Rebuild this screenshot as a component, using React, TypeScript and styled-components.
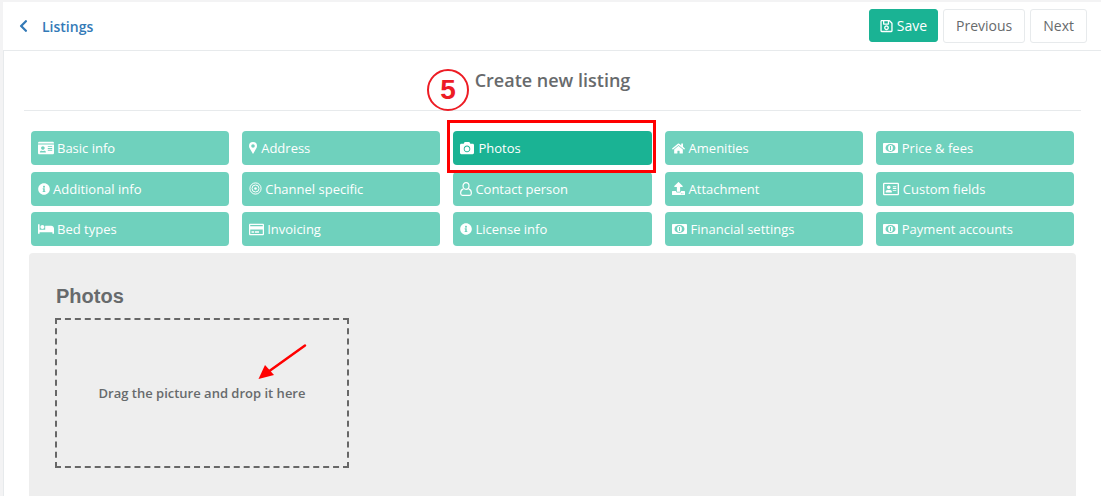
import React from "react";
import styled, { createGlobalStyle } from "styled-components";
import {
  FaIdCard, FaCamera, FaHome, FaInfoCircle,
  FaUpload, FaRegAddressCard, FaBed, FaRegCreditCard, FaRegSave, FaChevronLeft,
} from "react-icons/fa";

const Global = createGlobalStyle`
  html, body { margin: 0; padding: 0; background: #f3f3f4; overflow: hidden; }
  * { box-sizing: border-box; }
`;

const Page = styled.div`
  position: relative;
  width: 1101px;
  height: 496px;
  padding: 2px 0 0 3px;
  overflow: hidden;
  font-family: "Open Sans", "Liberation Sans", sans-serif;
  color: #676a6c;
`;

const Header = styled.header`
  height: 49px;
  background: #fff;
  border-bottom: 1px solid #e7eaec;
  display: flex;
  align-items: center;
  justify-content: space-between;
  padding: 0 14px 0 16px;
`;

const Back = styled.a`
  display: flex;
  align-items: center;
  gap: 14px;
  color: #337ab7;
  font-size: 14px;
  font-weight: 600;
  svg { width: 9px; height: 14px; }
`;

const Actions = styled.div`
  display: flex;
  gap: 5px;
  align-items: center;
  margin-bottom: 1px;
`;

const Button = styled.button<{ $primary?: boolean }>`
  height: ${p => (p.$primary ? 33 : 34)}px;
  padding: 0 ${p => (p.$primary ? 10 : 12)}px;
  display: flex;
  align-items: center;
  gap: 4px;
  font: 14px "Open Sans", "Liberation Sans", sans-serif;
  border-radius: 3px;
  border: 1px solid ${p => (p.$primary ? "#1ab394" : "#e7eaec")};
  background: ${p => (p.$primary ? "#1ab394" : "#fff")};
  color: ${p => (p.$primary ? "#fff" : "#676a6c")};
  svg { width: 13px; height: 14px; }
`;

const Main = styled.main`
  height: 445px;
  background: #fff;
  border-left: 1px solid #e7eaec;
  padding: 0 20px 0 25px;
  overflow: hidden;
`;

const TitleRow = styled.div`
  height: 60px;
  margin: 0 0 20px -5px;
  width: 1057px;
  border-bottom: 1px solid #e7eaec;
  display: flex;
  justify-content: center;
  padding-top: 17px;
`;

const Title = styled.h2`
  margin: 0;
  font-size: 18px;
  line-height: 25px;
  font-weight: 600;
  color: #676a6c;
`;

const TabGrid = styled.nav`
  display: grid;
  width: 1043px;
  margin-left: 2px;
  grid-template-columns: repeat(5, 1fr);
  column-gap: 13px;
  grid-auto-rows: 34px;
  row-gap: 6.5px;
`;

const Tab = styled.div<{ $active?: boolean; $iconWidth: number; $gap: number }>`
  display: flex;
  align-items: center;
  gap: ${p => p.$gap}px;
  padding: 0 7px;
  border-radius: 4px;
  background: ${p => (p.$active ? "#1ab394" : "#6fd1bd")};
  color: #fff;
  font-size: 13px;
  white-space: nowrap;
  svg { flex: none; width: ${p => p.$iconWidth}px; height: auto; }
`;

const Panel = styled.section`
  margin: 7px 0 0 0;
  width: 1047px;
  height: 260px;
  background: #eeeeee;
  border-radius: 4px;
  padding: 32px 26px;
`;

const PanelTitle = styled.h3`
  margin: 0 0 11px 1px;
  font: bold 20px/22px "Liberation Sans", Arial, sans-serif;
  color: #676a6c;
`;

const DropZone = styled.div`
  width: 294px;
  height: 150px;
  border: 2px dashed #676767;
  display: flex;
  align-items: center;
  justify-content: center;
  font-size: 13px;
  font-weight: 600;
  color: #676a6c;
`;

const Step = styled.div`
  position: absolute;
  left: 427px;
  top: 69px;
  width: 42px;
  height: 42px;
  border: 2px solid #ed1c24;
  border-radius: 50%;
  display: flex;
  align-items: center;
  justify-content: center;
  font: bold 28px/1 "Liberation Sans", Arial, sans-serif;
  color: #ed1c24;
`;

const Highlight = styled.div`
  position: absolute;
  left: 447px;
  top: 120px;
  width: 209px;
  height: 53px;
  border: 3px solid #ff0000;
`;

const Arrow = styled.svg`
  position: absolute;
  left: 250px;
  top: 340px;
`;

const Money = () => (
  <svg viewBox="0 0 15 10">
    <rect width="15" height="10" rx="0.8" fill="#fff" />
    <ellipse cx="7.5" cy="5" rx="5" ry="3.9" fill="#6fd1bd" />
    <ellipse cx="7.5" cy="5" rx="2.4" ry="3.1" fill="#fff" />
    <rect x="7" y="3" width="1" height="4" fill="#6fd1bd" />
  </svg>
);

const Marker = () => (
  <svg viewBox="0 0 8 12">
    <path
      fillRule="evenodd"
      fill="#fff"
      d="M4 0a4 4 0 0 1 4 4c0 1.1-.4 1.8-.8 2.6L4 12 .8 6.6C.4 5.8 0 5.1 0 4a4 4 0 0 1 4-4zm0 2.2a1.8 1.8 0 1 0 0 3.6 1.8 1.8 0 0 0 0-3.6z"
    />
  </svg>
);

const UserOutline = () => (
  <svg viewBox="0 0 12 14" fill="none" stroke="#fff" strokeWidth="1.2">
    <ellipse cx="6" cy="4" rx="3" ry="3.3" />
    <path d="M3.4 6.9C1.8 7.4.7 8.8.7 10.6v.9c0 1 .8 1.8 1.8 1.8h7c1 0 1.8-.8 1.8-1.8v-.9c0-1.8-1.1-3.2-2.7-3.7" />
  </svg>
);

const Rings = () => (
  <svg viewBox="0 0 13 13" fill="none" stroke="#fff">
    <circle cx="6.5" cy="6.5" r="5.6" strokeWidth="1" />
    <circle cx="6.5" cy="6.5" r="3.5" strokeWidth="1" />
    <circle cx="6.5" cy="6.5" r="1.3" fill="#fff" strokeWidth="0" />
  </svg>
);

type TabItem = { icon: React.ComponentType; label: string; width: number; gap: number; active?: boolean };

const tabs: TabItem[] = [
  { icon: FaIdCard, label: "Basic info", width: 16, gap: 3 },
  { icon: Marker, label: "Address", width: 8, gap: 4 },
  { icon: FaCamera, label: "Photos", width: 14, gap: 4, active: true },
  { icon: FaHome, label: "Amenities", width: 13, gap: 4 },
  { icon: Money, label: "Price & fees", width: 15, gap: 4 },
  { icon: FaInfoCircle, label: "Additional info", width: 12, gap: 3 },
  { icon: Rings, label: "Channel specific", width: 13, gap: 3 },
  { icon: UserOutline, label: "Contact person", width: 12, gap: 3 },
  { icon: FaUpload, label: "Attachment", width: 13, gap: 4 },
  { icon: FaRegAddressCard, label: "Custom fields", width: 16, gap: 4 },
  { icon: FaBed, label: "Bed types", width: 16, gap: 3 },
  { icon: FaRegCreditCard, label: "Invoicing", width: 15, gap: 3 },
  { icon: FaInfoCircle, label: "License info", width: 12, gap: 3 },
  { icon: Money, label: "Financial settings", width: 15, gap: 4 },
  { icon: Money, label: "Payment accounts", width: 15, gap: 4 },
];

export default function App() {
  return (
    <Page>
      <Global />
      <Header>
        <Back><FaChevronLeft />Listings</Back>
        <Actions>
          <Button $primary><FaRegSave />Save</Button>
          <Button>Previous</Button>
          <Button>Next</Button>
        </Actions>
      </Header>
      <Main>
        <TitleRow><Title>Create new listing</Title></TitleRow>
        <TabGrid>
          {tabs.map(({ icon: Icon, label, width, gap, active }) => (
            <Tab key={label} $active={active} $iconWidth={width} $gap={gap}><Icon />{label}</Tab>
          ))}
        </TabGrid>
        <Panel>
          <PanelTitle>Photos</PanelTitle>
          <DropZone>Drag the picture and drop it here</DropZone>
        </Panel>
      </Main>
      <Step>5</Step>
      <Highlight />
      <Arrow width="60" height="45" viewBox="0 0 60 45">
        <line x1="55" y1="5.5" x2="18" y2="32" stroke="#ff0000" strokeWidth="2.5" strokeLinecap="round" />
        <polygon points="8.5,39 15,25 24,35" fill="#ff0000" />
      </Arrow>
    </Page>
  );
}
